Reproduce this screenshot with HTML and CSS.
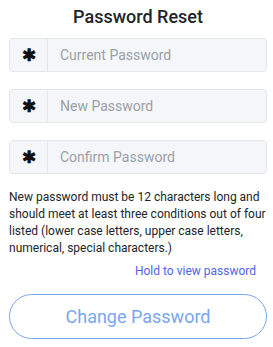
FILE: index.html
```html
<!DOCTYPE html>
<html lang="en">
  <head>
    <meta charset="UTF-8" />
    <meta name="viewport" content="width=device-width, initial-scale=1.0" />
    <title>Password Reset</title>
    <link rel="stylesheet" href="styles.css">
  </head>
  <body>
    <div class="reset-form">
      <h2>Password Reset</h2>

      <div class="input-group">
        <span class="input-icon">&#10033;</span>
        <input type="password" placeholder="Current Password" />
      </div>
      <div class="input-group">
        <span class="input-icon">&#10033;</span>
        <input type="password" placeholder="New Password" />
      </div>
      <div class="input-group">
        <span class="input-icon">&#10033;</span>
        <input type="password" placeholder="Confirm Password" />
      </div>

      <p class="hint">
        New password must be 12 characters long and should meet at least three
        conditions out of four listed (lower case letters, upper case letters,
        numerical, special characters.)
      </p>

      <div class="view-link"><a href="#">Hold to view password</a></div>

      <button type="button" class="change-btn">Change Password</button>
    </div>
  </body>
</html>
```

FILE: styles.css
```css
body {
  font-family: Roboto, "Liberation Sans", Arial, sans-serif;
  margin: 0;
  padding: 0;
  background: #fff;
  color: #212529;
}

.reset-form {
  padding: 6px 6px 0 9px;
}

.reset-form h2 {
  margin: 0 0 10px;
  text-align: center;
  font-size: 18px;
  font-weight: 500;
  line-height: 22px;
}

.input-group {
  display: flex;
  height: 34px;
  margin-bottom: 17px;
  border: 1px solid #e3e6ea;
  border-radius: 4px;
  background: #f4f6fa;
  box-sizing: border-box;
}

.input-icon {
  width: 37px;
  flex: none;
  display: flex;
  align-items: center;
  justify-content: center;
  border-right: 1px solid #e3e6ea;
  font-size: 17px;
  font-weight: bold;
  color: #111;
}

.input-group input {
  flex: 1;
  min-width: 0;
  border: none;
  background: transparent;
  padding: 0 12px;
  font-family: inherit;
  font-size: 14px;
  color: #333;
  outline: none;
}

.input-group input::placeholder {
  color: #9aa0a6;
}

.hint {
  margin: -2px 0 0;
  font-size: 12px;
  line-height: 17px;
  color: #212529;
}

.view-link {
  text-align: right;
  margin: 5px 11px 0 0;
  line-height: 15px;
}

.view-link a {
  font-size: 12px;
  color: #4e66e6;
  text-decoration: none;
}

.change-btn {
  display: block;
  width: 258px;
  height: 45px;
  margin-top: 15px;
  border: 1px solid #79a6ea;
  border-radius: 23px;
  background: #fff;
  color: #7aa7ec;
  font-family: inherit;
  font-size: 18px;
  cursor: pointer;
}
```
